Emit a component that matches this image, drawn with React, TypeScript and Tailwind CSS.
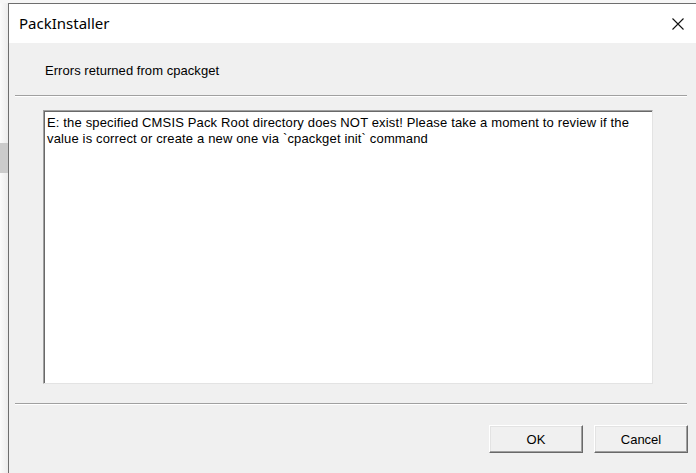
const errorLines = [
  "E: the specified CMSIS Pack Root directory does NOT exist! Please take a moment to review if the",
  "value is correct or create a new one via `cpackget init` command",
];

const CloseIcon = () => (
  <svg width="12" height="12" viewBox="0 0 12 12" className="block">
    <path d="M0.5 0.5L11.5 11.5M11.5 0.5L0.5 11.5" stroke="#111" strokeWidth="1.1" />
  </svg>
);

const DialogButton = ({ label }: { label: string }) => (
  <button
    type="button"
    className="w-[94px] h-[28px] bg-[#f0f0f0] border border-t-white border-l-white border-r-[#696969] border-b-[#696969] shadow-[inset_-1px_-1px_0_#a0a0a0,inset_1px_1px_0_#e3e3e3] text-[13px] text-black leading-none"
  >
    {label}
  </button>
);

const Divider = () => (
  <div className="ml-[6px] mr-[9px] h-[2px] border-t border-t-[#a0a0a0] border-b border-b-white" />
);

export default function App() {
  return (
    <div className="w-[696px] h-[473px] overflow-hidden flex bg-[#f6f6f6] pt-[3px] font-['Liberation_Sans',Arial,sans-serif]">
      {/* desktop strip left of the window */}
      <div className="w-[8px] shrink-0 bg-gradient-to-r from-[#fbfbfb] to-[#ececec]">
        <div className="mt-[140px] h-[30px] bg-[#cbcbcb]" />
      </div>

      <div className="flex-1 flex flex-col border-t border-l border-[#6e6e6e]">
        {/* title bar */}
        <div className="h-[39px] shrink-0 bg-white flex items-center justify-between pl-[10px] pr-[12px]">
          <span className="text-[15px] text-black font-['Noto_Sans','Noto_Sans_CJK_SC',sans-serif] pb-[1px]">
            PackInstaller
          </span>
          <CloseIcon />
        </div>

        {/* client area */}
        <div className="flex-1 bg-[#f0f0f0] flex flex-col">
          <p className="mt-[20px] ml-[36px] text-[13px] leading-[16px] text-black tracking-[0.05px]">
            Errors returned from cpackget
          </p>
          <div className="mt-[16px]">
            <Divider />
          </div>

          <div className="mt-[13px] ml-[34px] w-[610px] h-[274px] border border-t-[#a0a0a0] border-l-[#a0a0a0] border-r-[#e3e3e3] border-b-[#e3e3e3] bg-white shadow-[inset_1px_1px_0_#696969]">
            <div className="pl-[3px] pt-[4px] text-[13px] leading-[16px] text-black whitespace-nowrap tracking-[0.15px]">
              {errorLines.map((line) => (
                <div key={line}>{line}</div>
              ))}
            </div>
          </div>

          <div className="mt-[19px]">
            <Divider />
          </div>

          <div className="mt-[20px] mr-[8px] flex justify-end gap-[11px]">
            <DialogButton label="OK" />
            <DialogButton label="Cancel" />
          </div>
        </div>
      </div>
    </div>
  );
}
